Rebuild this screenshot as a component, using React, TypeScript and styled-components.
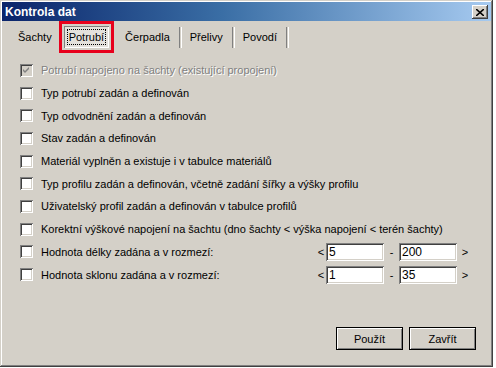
import React from "react";
import styled, {createGlobalStyle, css} from "styled-components";

const face = "#d4d0c8";
const shadow = "#808080";
const darkShadow = "#404040";

const GlobalStyle = createGlobalStyle`
    html, body {
        margin: 0;
        padding: 0;
        background: #ffffff;
    }
    body {
        font-family: "Liberation Sans", Arial, sans-serif;
        font-size: 11px;
        color: #000;
    }
`;

/**
 * Outer window frame with the classic raised bevel.
 */
const Window = styled.div`
    width: 493px;
    height: 367px;
    box-sizing: border-box;
    padding: 2px;
    background: ${face};
    display: flex;
    flex-direction: column;
    box-shadow: inset -1px -1px ${darkShadow}, inset 1px 1px ${face},
        inset -2px -2px ${shadow}, inset 2px 2px #fff;
`;

const TitleBar = styled.div`
    height: 19px;
    display: flex;
    align-items: center;
    justify-content: space-between;
    padding: 0 3px 0 3px;
    background: linear-gradient(to right, #0a246a 0%, #3a6ea5 45%, #a6caf0 100%);
    color: #fff;
    font-weight: bold;
    font-size: 12px;
`;

const CloseButton = styled.div`
    width: 16px;
    height: 14px;
    box-sizing: border-box;
    background: ${face};
    display: flex;
    align-items: center;
    justify-content: center;
    margin-top: 1px;
    box-shadow: inset -1px -1px ${darkShadow}, inset 1px 1px #fff,
        inset -2px -2px ${shadow}, inset 2px 2px ${face};
`;

const Body = styled.div`
    flex: 1;
    display: flex;
    flex-direction: column;
    padding: 5px 15px 15px 16px;
`;

const Tabs = styled.div`
    display: flex;
    align-items: center;
    height: 22px;
    margin-left: -10px;
`;

const Tab = styled.div<{$active?: boolean; $sep?: boolean}>`
    position: relative;
    height: 22px;
    padding: 0 10px;
    display: flex;
    align-items: center;
    font-size: 11px;
    ${p => p.$sep && css`
        &::after {
            content: "";
            position: absolute;
            right: -2px;
            top: 1px;
            bottom: 0;
            width: 1px;
            border-left: 1px solid ${shadow};
            border-right: 1px solid #fff;
        }
    `}
    ${p => p.$active && css`
        margin: 0 6px 0 2px;
        padding: 0 3px;
        background: #e4e1dc;
        box-shadow: inset 1px 1px ${shadow}, inset -1px -1px #fff;
        outline: 3px solid #e8001c;
        outline-offset: 2px;
        & > span {
            border: 1px dotted #000;
            padding: 1px 1px;
        }
    `}
`;

const List = styled.div`
    margin-top: 11px;
    display: flex;
    flex-direction: column;
`;

const Row = styled.div`
    height: 22.7px;
    display: flex;
    align-items: center;
    gap: 8px;
`;

const Box = styled.span<{$disabled?: boolean}>`
    width: 13px;
    height: 13px;
    box-sizing: border-box;
    flex: none;
    margin-left: 2px;
    background: ${p => p.$disabled ? face : "#fff"};
    box-shadow: inset 1px 1px ${shadow}, inset -1px -1px #fff,
        inset 2px 2px ${darkShadow}, inset -2px -2px ${face};
    display: flex;
    align-items: center;
    justify-content: center;
`;

const Label = styled.span<{$disabled?: boolean}>`
    white-space: nowrap;
    color: ${p => p.$disabled ? shadow : "#000"};
    text-shadow: ${p => p.$disabled ? "1px 1px #fff" : "none"};
`;

const Range = styled.div`
    margin-left: auto;
    display: flex;
    align-items: center;
    margin-right: 3px;
`;

const Sign = styled.span<{$w?: number}>`
    width: ${p => p.$w ?? 10}px;
    text-align: center;
    color: #000;
`;

const Input = styled.div`
    width: 58px;
    height: 18px;
    box-sizing: border-box;
    background: #fff;
    padding: 2px 3px;
    line-height: 14px;
    font-size: 12px;
    box-shadow: inset 1px 1px ${shadow}, inset -1px -1px #fff,
        inset 2px 2px ${darkShadow}, inset -2px -2px ${face};
`;

const Footer = styled.div`
    margin-top: auto;
    display: flex;
    justify-content: flex-end;
    gap: 6px;
`;

const Button = styled.div`
    width: 67px;
    height: 23px;
    box-sizing: border-box;
    display: flex;
    align-items: center;
    justify-content: center;
    font-size: 11px;
    border: 1px solid #000;
    box-shadow: inset 1px 1px #fff, inset -1px -1px ${shadow};
`;

const Check = () => (
    <svg width="7" height="7" viewBox="0 0 7 7">
        <path d="M0 2 L2 4 L6 0 L6 2 L2 6 L0 4 Z" fill={shadow} />
    </svg>
);

const items = [
    "Typ potrubí zadán a definován",
    "Typ odvodnění zadán a definován",
    "Stav zadán a definován",
    "Materiál vyplněn a existuje i v tabulce materiálů",
    "Typ profilu zadán a definován, včetně zadání šířky a výšky profilu",
    "Uživatelský profil zadán a definován v tabulce profilů",
    "Korektní výškové napojení na šachtu (dno šachty < výška napojení < terén  šachty)",
];

const ranges = [
    {label: "Hodnota délky zadána a v rozmezí:", from: "5", to: "200"},
    {label: "Hodnota sklonu zadána a v rozmezí:", from: "1", to: "35"},
];

export default function App() {
    return <>
        <GlobalStyle />
        <Window>
            <TitleBar>
                <span>Kontrola dat</span>
                <CloseButton>
                    <svg width="8" height="7" viewBox="0 0 8 7">
                        <path d="M0 0 L8 7 M8 0 L0 7" stroke="#000" strokeWidth="1.6" />
                    </svg>
                </CloseButton>
            </TitleBar>
            <Body>
                <Tabs>
                    <Tab>Šachty</Tab>
                    <Tab $active><span>Potrubí</span></Tab>
                    <Tab $sep>Čerpadla</Tab>
                    <Tab $sep>Přelivy</Tab>
                    <Tab $sep>Povodí</Tab>
                </Tabs>
                <List>
                    <Row>
                        <Box $disabled><Check /></Box>
                        <Label $disabled>Potrubí napojeno na šachty (existující propojení)</Label>
                    </Row>
                    {items.map(it => <Row key={it}>
                        <Box />
                        <Label>{it}</Label>
                    </Row>)}
                    {ranges.map(r => <Row key={r.label}>
                        <Box />
                        <Label>{r.label}</Label>
                        <Range>
                            <Sign>&lt;</Sign>
                            <Input>{r.from}</Input>
                            <Sign $w={15}>-</Sign>
                            <Input>{r.to}</Input>
                            <Sign $w={16}>&gt;</Sign>
                        </Range>
                    </Row>)}
                </List>
                <Footer>
                    <Button>Použít</Button>
                    <Button>Zavřít</Button>
                </Footer>
            </Body>
        </Window>
    </>;
}
